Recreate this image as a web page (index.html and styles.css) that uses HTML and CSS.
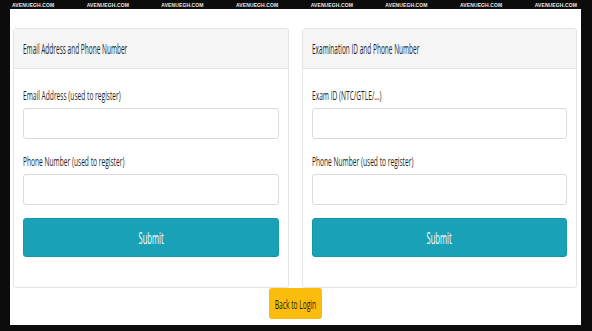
FILE: index.html
```html
<!DOCTYPE html>
<html>
<head>
<meta charset="utf-8">
<link rel="stylesheet" href="styles.css">
</head>
<body>
<div class="frame">
  <div class="marks">
    <span>AVENUEGH.COM</span><span>AVENUEGH.COM</span><span>AVENUEGH.COM</span><span>AVENUEGH.COM</span>
    <span>AVENUEGH.COM</span><span>AVENUEGH.COM</span><span>AVENUEGH.COM</span><span>AVENUEGH.COM</span>
  </div>
  <div class="screen">
    <div class="cards">
      <div class="card card-left">
        <div class="card-header"><span class="sq sq-h">Email Address and Phone Number</span></div>
        <div class="card-body">
          <label class="label"><span class="sq sq-l">Email Address (used to register)</span></label>
          <div class="input"></div>
          <label class="label"><span class="sq sq-l">Phone Number (used to register)</span></label>
          <div class="input"></div>
          <button class="submit"><span class="sq sq-b">Submit</span></button>
        </div>
      </div>
      <div class="card card-right">
        <div class="card-header"><span class="sq sq-h">Examination ID and Phone Number</span></div>
        <div class="card-body">
          <label class="label"><span class="sq sq-l">Exam ID (NTC/GTLE/...)</span></label>
          <div class="input"></div>
          <label class="label"><span class="sq sq-l">Phone Number (used to register)</span></label>
          <div class="input"></div>
          <button class="submit"><span class="sq sq-b">Submit</span></button>
        </div>
      </div>
    </div>
    <div class="back-row">
      <button class="back"><span class="sq sq-k">Back to Login</span></button>
    </div>
  </div>
</div>
</body>
</html>
```
FILE: styles.css
```css
* { box-sizing: border-box; }
html, body { margin: 0; padding: 0; }
body {
  background: #0c0c0c;
  font-family: "Open Sans", "Noto Sans", sans-serif;
  width: 592px;
  height: 331px;
  overflow: hidden;
}
.frame {
  display: flex;
  flex-direction: column;
  padding: 0 11px 6px 10px;
  height: 331px;
}
.marks {
  height: 9px;
  display: flex;
  justify-content: space-between;
  align-items: center;
  padding: 0 4px 0 2px;
  font-family: "Liberation Sans", Arial, sans-serif;
  font-weight: bold;
  font-size: 5px;
  color: #e8e8e8;
  letter-spacing: 0.1px;
}
.screen {
  flex: 1;
  background: #ffffff;
  padding: 19px 4px 0 3px;
  display: flex;
  flex-direction: column;
}
.cards {
  display: flex;
  gap: 13px;
}
.card {
  border: 1px solid #e4e4e4;
  border-radius: 3px;
  background: #fff;
  height: 260px;
  display: flex;
  flex-direction: column;
}
.card-left { width: 276px; }
.card-right { width: 275px; }
.card-header {
  height: 40px;
  background: #f5f5f5;
  border-bottom: 1px solid #e6e6e6;
  display: flex;
  align-items: center;
  padding-left: 9px;
  font-size: 14px;
  color: #1f1f1f;
}
.card-body {
  padding: 18px 9px 0 9px;
  display: flex;
  flex-direction: column;
}
.label {
  display: block;
  height: 16px;
  line-height: 16px;
  font-size: 13px;
  color: #1f1f1f;
  margin-bottom: 5px;
}
.input {
  height: 31px;
  border: 1px solid #dadada;
  border-radius: 3px;
  background: #fff;
  margin-bottom: 14px;
}
.submit {
  margin-top: -1px;
  height: 39px;
  border: 1px solid #1795aa;
  border-radius: 3px;
  background: #19a2b7;
  color: #ffffff;
  font-family: inherit;
  font-size: 17px;
  padding: 0;
  display: flex;
  align-items: center;
  justify-content: center;
}
.back-row {
  display: flex;
  justify-content: center;
  margin-top: 0;
}
.back {
  width: 53px;
  height: 31px;
  border: none;
  border-radius: 3px;
  background: #fbbd0d;
  color: #1a1a1a;
  font-family: inherit;
  font-size: 13px;
  padding: 0;
  display: flex;
  align-items: center;
  justify-content: center;
  white-space: nowrap;
}
.sq {
  display: inline-block;
  white-space: nowrap;
  transform-origin: left center;
}
.sq-h { transform: scaleX(0.465); }
.sq-l { transform: scaleX(0.51); }
.sq-b { transform: scaleX(0.45); transform-origin: center center; }
.sq-k { transform: scaleX(0.51); transform-origin: center center; }
```
